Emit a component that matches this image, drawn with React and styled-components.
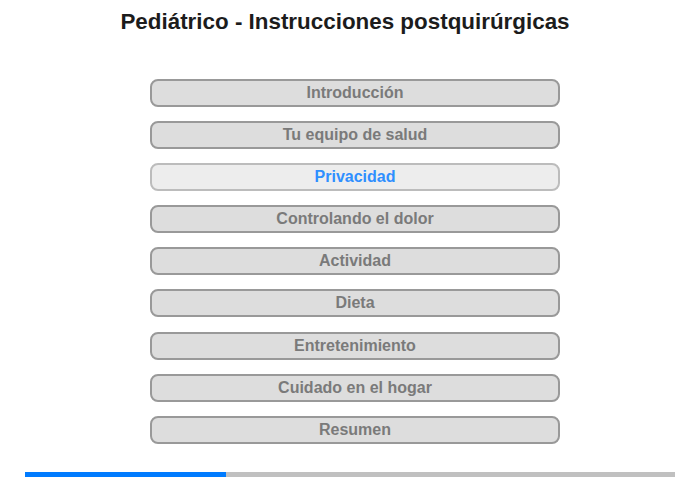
import React from "react";
import styled, { createGlobalStyle } from "styled-components";

const items = [
  "Introducción",
  "Tu equipo de salud",
  "Privacidad",
  "Controlando el dolor",
  "Actividad",
  "Dieta",
  "Entretenimiento",
  "Cuidado en el hogar",
  "Resumen",
];

const App = () => {
  const active = 2;
  const progress = 201 / 650;

  return (
    <>
      <GlobalStyle />
      <Page>
        <Title>Pediátrico - Instrucciones postquirúrgicas</Title>
        <Menu>
          {items.map((item, i) => (
            <MenuButton key={item} $active={i === active}>
              {item}
            </MenuButton>
          ))}
        </Menu>
        <Progress>
          <ProgressFill style={{ width: `${progress * 100}%` }} />
        </Progress>
      </Page>
    </>
  );
};

const GlobalStyle = createGlobalStyle`
  body {
    margin: 0;
    background: #fff;
    font-family: "Liberation Sans", Arial, sans-serif;
  }
`;

const Page = styled.div`
  width: 700px;
  height: 480px;
  display: flex;
  flex-direction: column;
  align-items: center;
`;

const Title = styled.h1`
  margin: 9px 10px 0 0;
  font-size: 22.4px;
  line-height: 26px;
  font-weight: bold;
  color: #1c1c1c;
`;

const Menu = styled.div`
  margin-top: 44px;
  margin-left: 10px;
  width: 410px;
  display: flex;
  flex-direction: column;
  gap: 14.1px;
`;

const MenuButton = styled.div`
  box-sizing: border-box;
  height: 28px;
  border: 2px solid ${(p) => (p.$active ? "#bcbcbc" : "#999")};
  border-radius: 8px;
  background: ${(p) => (p.$active ? "#ededed" : "#dddddd")};
  color: ${(p) => (p.$active ? "#2f8fff" : "#7a7a7a")};
  font-size: 16px;
  font-weight: bold;
  display: flex;
  align-items: center;
  justify-content: center;
  cursor: pointer;
`;

const Progress = styled.div`
  margin-top: 28px;
  width: 650px;
  height: 5px;
  background: #c0c0c0;
  display: flex;
`;

const ProgressFill = styled.div`
  background: #007bff;
  height: 100%;
`;

export default App;
